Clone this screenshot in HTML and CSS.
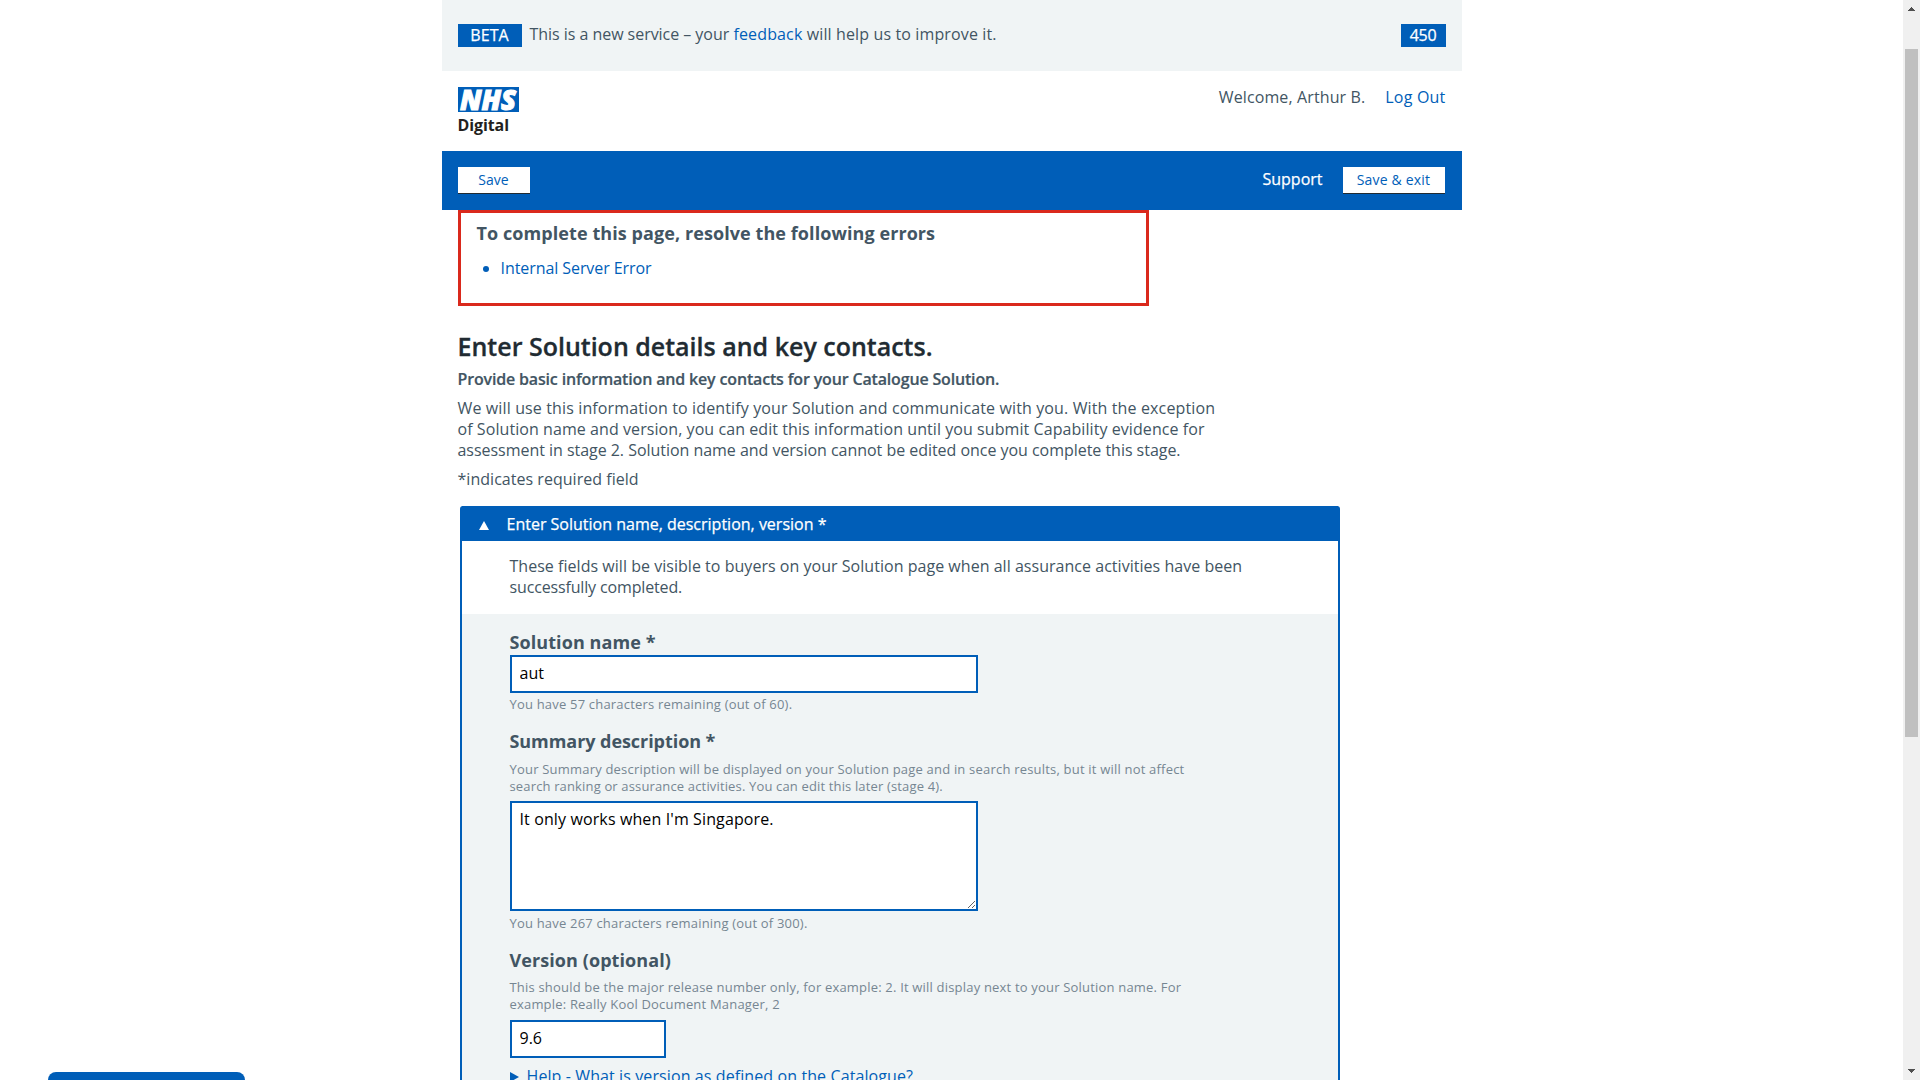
FILE: index.html
```html
<!DOCTYPE html>
<html lang="en">
<head>
<meta charset="utf-8">
<title>Enter Solution details and key contacts</title>
<link rel="stylesheet" href="styles.css">
</head>
<body>
<div class="viewport">
  <div class="page">
    <section class="beta-bar">
      <span class="tag tag-beta">BETA</span>
      <p class="beta-text"><span class="beta-start">This is a new service – your</span> <a href="#">feedback</a> will help us to improve it.</p>
      <span class="tag tag-count">450</span>
    </section>
    <header class="header">
      <div class="logo">
        <svg class="logo-mark" width="61" height="25" viewBox="0 0 61 25">
          <rect width="61" height="25" fill="#005eb8"/>
          <text class="logo-nhs" x="2" y="22.5" textLength="56" lengthAdjust="spacingAndGlyphs">NHS</text>
        </svg>
        <span class="logo-name">Digital</span>
      </div>
      <div class="account">
        <span class="welcome">Welcome, Arthur B.</span>
        <a class="logout" href="#">Log Out</a>
      </div>
    </header>
    <nav class="nav">
      <button class="btn btn-save">Save</button>
      <a class="support" href="#">Support</a>
      <button class="btn btn-exit">Save &amp; exit</button>
    </nav>
    <main class="main">
      <section class="errors">
        <h3 class="errors-title">To complete this page, resolve the following errors</h3>
        <ul class="errors-list"><li><a href="#">Internal Server Error</a></li></ul>
      </section>
      <h1 class="title">Enter Solution details and key contacts.</h1>
      <p class="lead">Provide basic information and key contacts for your Catalogue Solution.</p>
      <p class="intro">
        <span class="line intro-1">We will use this information to identify your Solution and communicate with you. With the exception</span>
        <span class="line intro-2">of Solution name and version, you can edit this information until you submit Capability evidence for</span>
        <span class="line intro-3">assessment in stage 2. Solution name and version cannot be edited once you complete this stage.</span>
      </p>
      <p class="required">*indicates required field</p>
      <section class="accordion">
        <div class="accordion-head">
          <svg class="caret" width="10" height="9" viewBox="0 0 10 9"><path d="M5 0L10 9H0Z" fill="#fff"/></svg>
          <span class="accordion-title">Enter Solution name, description, version *</span>
        </div>
        <div class="accordion-intro">
          <span class="line fields-1">These fields will be visible to buyers on your Solution page when all assurance activities have been</span>
          <span class="line fields-2">successfully completed.</span>
        </div>
        <form class="form">
          <label class="label" for="name">Solution name *</label>
          <input class="control" id="name" type="text" value="aut">
          <p class="remaining">You have 57 characters remaining (out of 60).</p>
          <label class="label label-summary" for="summary">Summary description *</label>
          <p class="hint hint-summary">
            <span class="line">Your Summary description will be displayed on your Solution page and in search results, but it will not affect</span>
            <span class="line hint-last">search ranking or assurance activities. You can edit this later (stage 4).</span>
          </p>
          <textarea class="control control-area" id="summary">It only works when I'm Singapore.</textarea>
          <p class="remaining remaining-area">You have 267 characters remaining (out of 300).</p>
          <label class="label" for="version">Version (optional)</label>
          <p class="hint hint-version">
            <span class="line">This should be the major release number only, for example: 2. It will display next to your Solution name. For</span>
            <span class="line">example: Really Kool Document Manager, 2</span>
          </p>
          <input class="control control-version" id="version" type="text" value="9.6">
          <div class="help">
            <svg width="9" height="10" viewBox="0 0 9 10"><path d="M0 0L9 5L0 10Z" fill="#005eb8"/></svg>
            <span>Help - What is version as defined on the Catalogue?</span>
          </div>
        </form>
      </section>
    </main>
  </div>
  <div class="drawer-tab"></div>
</div>
<div class="scrollbar">
  <svg width="7" height="4" viewBox="0 0 7 4" shape-rendering="crispEdges"><path d="M3 0h1v1h1v1h1v1h1v1h-7v-1h1v-1h1v-1h1z" fill="#505050"/></svg>
  <div class="thumb"></div>
  <svg class="arrow-down" width="7" height="4" viewBox="0 0 7 4" shape-rendering="crispEdges"><path d="M0 0h7v1h-1v1h-1v1h-1v1h-1v-1h-1v-1h-1v-1h-1z" fill="#505050"/></svg>
</div>
</body>
</html>
```
FILE: styles.css
```css
* {
  box-sizing: border-box;
  margin: 0;
  padding: 0;
}

body {
  display: flex;
  height: 1080px;
  overflow: hidden;
  background: #fff;
  color: #425563;
  font: 16px/21px "Open Sans", "Noto Sans", sans-serif;
  white-space: nowrap;
}

a {
  color: #005eb8;
  text-decoration: none;
}

.line {
  display: block;
}

.viewport {
  position: relative;
  flex: 1;
  height: 1080px;
  overflow: hidden;
}

.page {
  width: 1020px;
  margin: 0 auto;
}

/* Beta banner */

.beta-bar {
  display: flex;
  align-items: flex-start;
  height: 71px;
  padding: 24px 16px 0;
  background: #f0f4f5;
}

.tag {
  height: 23px;
  background: #005eb8;
  color: #fff;
  line-height: 22px;
  text-align: center;
}

.tag,
.support,
.accordion-title {
  -webkit-text-stroke: 0.25px #fff;
}

.tag-beta {
  width: 64px;
  letter-spacing: 0.09px;
}

.beta-text {
  margin: 0 auto 0 8px;
  letter-spacing: 0.13px;
}

.beta-start {
  letter-spacing: -0.04px;
}

.tag-count {
  width: 45px;
  letter-spacing: -0.3px;
}

/* Header */

.header {
  display: flex;
  justify-content: space-between;
  height: 80px;
  padding: 16px 16px 0;
}

.logo {
  display: flex;
  flex-direction: column;
}

.logo-mark {
  display: block;
  overflow: visible;
}

.logo-nhs {
  fill: #fff;
  stroke: #fff;
  stroke-width: 1.1px;
  font: italic 800 28px/25px "Open Sans", sans-serif;
}

.logo-name {
  margin-top: 3px;
  color: #231f20;
  font-weight: 700;
  letter-spacing: -0.1px;
}

.account {
  display: flex;
  gap: 20px;
}

.welcome {
  letter-spacing: 0.12px;
}

.logout {
  letter-spacing: 0.2px;
}

/* Toolbar */

.nav {
  display: flex;
  align-items: flex-start;
  height: 59px;
  padding: 16px 17px 0 16px;
  background: #005eb8;
}

.btn {
  height: 26px;
  border: 0;
  background: #fff;
  box-shadow: 0 1px 0 #212b32;
  color: #005eb8;
  font: 14px/26px "Open Sans", "Noto Sans", sans-serif;
}

.btn-save {
  width: 72px;
  letter-spacing: 0.05px;
}

.btn-exit {
  width: 102px;
  letter-spacing: 0.18px;
}

.support {
  margin: 2px 20px 0 auto;
  color: #fff;
}

.main {
  padding: 0 16px;
}

/* Error summary */

.errors {
  width: 691px;
  height: 96px;
  padding: 8px 16px 0;
  border: 3px solid #da291c;
}

.errors-title {
  font-size: 18px;
  font-weight: 700;
  line-height: 24px;
  letter-spacing: 0.08px;
}

.errors-list {
  margin: 13px 0 0 24px;
  color: #005eb8;
  letter-spacing: -0.07px;
}

/* Page introduction */

.title {
  margin-top: 25px;
  color: #212b32;
  font-size: 25px;
  font-weight: 600;
  line-height: 30px;
  -webkit-text-stroke: 0.3px #212b32;
}

.lead {
  margin-top: 8px;
  font-weight: 600;
  letter-spacing: -0.165px;
  -webkit-text-stroke: 0.2px #425563;
}

.intro {
  margin-top: 8px;
}

.intro-1 {
  letter-spacing: 0.13px;
}

.intro-2 {
  letter-spacing: 0.07px;
}

.intro-3 {
  letter-spacing: -0.033px;
}

.required {
  margin-top: 8px;
  letter-spacing: 0.03px;
}

/* Accordion */

.accordion {
  width: 880px;
  margin: 16px 0 0 2px;
  border: solid #005eb8;
  border-width: 0 2px;
  border-radius: 3px 3px 0 0;
}

.accordion-head {
  display: flex;
  align-items: center;
  gap: 18px;
  height: 35px;
  padding-left: 17px;
  background: #005eb8;
  color: #fff;
}

.accordion-title {
  margin-top: 2px;
}

.caret {
  margin-top: 4px;
}

.accordion-intro {
  padding: 15px 0 16px 48px;
}

.fields-1 {
  letter-spacing: 0.032px;
}

.fields-2 {
  letter-spacing: -0.15px;
}

/* Form */

.form {
  height: 480px;
  padding: 16px 0 0 48px;
  background: #f0f4f5;
}

.label {
  display: block;
  font-size: 18px;
  font-weight: 700;
  line-height: 24px;
  letter-spacing: 0.08px;
}

.label-summary {
  letter-spacing: -0.06px;
}

.control {
  display: block;
  width: 468px;
  height: 38px;
  margin-top: 1px;
  padding: 0 8px 2px;
  border: 2px solid #005eb8;
  background: #fff;
  color: #000;
  font: 16px/21px "Open Sans", "Noto Sans", sans-serif;
  outline: 0;
}

.control-area {
  height: 110px;
  margin-top: 6px;
  padding: 6px 8px;
  letter-spacing: 0.12px;
}

.control-version {
  width: 156px;
  margin-top: 7px;
}

.remaining,
.hint {
  color: #768692;
  font-size: 13px;
  line-height: 17px;
  letter-spacing: 0.19px;
}

.remaining {
  margin: 3px 0 16px;
}

.remaining-area {
  margin-top: 4px;
}

.hint-summary {
  margin-top: 8px;
  letter-spacing: 0.201px;
}

.hint-last {
  letter-spacing: 0.15px;
}

.hint-version {
  margin-top: 7px;
}

.help {
  display: flex;
  align-items: center;
  gap: 8px;
  margin-top: 8px;
  color: #005eb8;
  letter-spacing: 0.1px;
  line-height: 20px;
}

.help svg {
  margin-top: 1px;
}

/* Tab that peeks over the bottom edge of the window */

.drawer-tab {
  position: absolute;
  left: 48px;
  bottom: 0;
  width: 197px;
  height: 8px;
  border-radius: 8px 8px 0 0;
  background: #005eb8;
}

/* Scrollbar */

.scrollbar {
  display: flex;
  flex-direction: column;
  align-items: center;
  width: 17px;
  padding: 7px 0;
  background: #f0f0f0;
}

.thumb {
  width: 13px;
  height: 688px;
  margin-top: 38px;
  background: #c0c0c0;
}

.arrow-down {
  margin-top: auto;
}
```
